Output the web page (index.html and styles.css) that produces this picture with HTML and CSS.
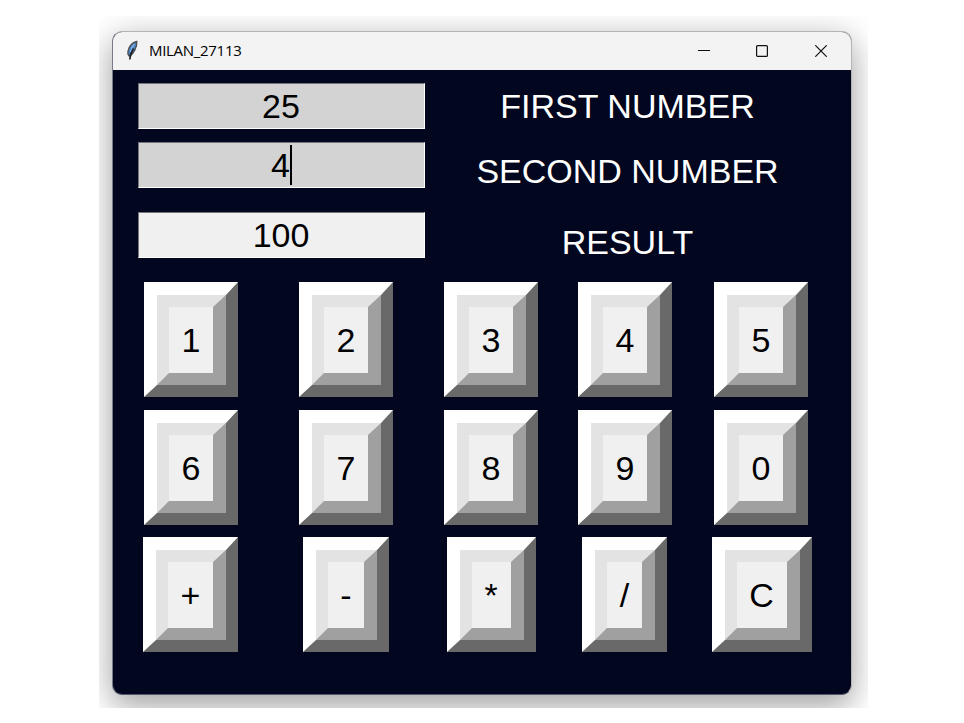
FILE: index.html
```html
<!DOCTYPE html>
<html lang="en">
<head>
<meta charset="utf-8">
<title>MILAN_27113</title>
<link rel="stylesheet" href="styles.css">
</head>
<body>
<main class="desktop">
  <section class="window">
    <header class="titlebar">
      <svg class="feather" width="14" height="22" viewBox="0 0 14 22">
        <path d="M11.800 1.500C7.500 2.500 4 6.500 3 11.200c-.4 2-.2 3.600.8 4.600l1.300.2C8.800 13.500 12 7.500 11.800 1.500Z" fill="#4a83c4" stroke="#4d4d4d" stroke-width="1.300"/>
        <path d="M9.500 4C7 6.500 5.800 9 5.400 12" fill="none" stroke="#7db2e8" stroke-width="1.600"/>
        <path d="M8.500 8.500C6.500 11.500 5 14.500 4.800 19.500" fill="none" stroke="#1c1c1c" stroke-width="1.600"/>
      </svg>
      <span class="title">MILAN_27113</span>
      <nav class="controls">
        <svg width="12" height="12" viewBox="0 0 12 12"><path d="M0 5.500H12" stroke="#111"/></svg>
        <svg width="12" height="12" viewBox="0 0 12 12"><rect x=".6" y=".6" width="10.800" height="10.800" rx="1" fill="none" stroke="#111" stroke-width="1.200"/></svg>
        <svg width="12" height="12" viewBox="0 0 12 12"><path d="M.3.3 11.700 11.700M11.700.3.300 11.700" stroke="#111" stroke-width="1.200"/></svg>
      </nav>
    </header>
    <div class="client">
      <div class="entry">25</div>
      <div class="label">FIRST NUMBER</div>
      <div class="entry"><span class="typed">4</span></div>
      <div class="label low">SECOND NUMBER</div>
      <div class="entry result">100</div>
      <div class="label low">RESULT</div>
      <button class="key"><span>1</span></button>
      <button class="key"><span>2</span></button>
      <button class="key"><span>3</span></button>
      <button class="key"><span>4</span></button>
      <button class="key"><span>5</span></button>
      <button class="key"><span>6</span></button>
      <button class="key"><span>7</span></button>
      <button class="key"><span>8</span></button>
      <button class="key"><span>9</span></button>
      <button class="key"><span>0</span></button>
      <button class="key plus"><span>+</span></button>
      <button class="key minus"><span>-</span></button>
      <button class="key times"><span>*</span></button>
      <button class="key divide"><span>/</span></button>
      <button class="key clear"><span>C</span></button>
    </div>
  </section>
</main>
</body>
</html>
```
FILE: styles.css
```css
* { box-sizing: border-box; }

body {
  margin: 0;
  background: #fff;
  font-family: "Liberation Sans", Arial, sans-serif;
}

.desktop {
  width: 769px;
  height: 692px;
  margin: 16px 0 0 99px;
  padding: 15px 16px 0 13px;
  overflow: hidden;
}

.window {
  height: 664px;
  border: 1px solid #b4b4b4;
  border-bottom-color: #55586a;
  border-left-color: #777a88;
  border-radius: 10px;
  overflow: hidden;
  background: #02061e;
  box-shadow: 0 14px 30px rgba(0, 0, 0, .25), 0 2px 34px rgba(0, 0, 0, .16);
}

.titlebar {
  display: flex;
  align-items: center;
  height: 38px;
  padding: 0 24px 0 12px;
  background: #f3f3f3;
}

.feather { margin-right: 10px; }

.title {
  margin-top: -2px;
  font: 15px/20px "Open Sans", "Noto Sans", sans-serif;
  letter-spacing: -.3px;
  color: #000;
}

.controls {
  display: flex;
  gap: 47px;
  margin-left: auto;
}

.controls svg { display: block; }
.controls svg:first-child { margin-right: -1px; }

.client {
  display: grid;
  grid-template-columns: 130px 180px 110px 158px 114px;
  grid-template-rows: 58px 59px 82px 127px 128px 127px;
  justify-items: center;
  align-items: center;
  padding: 7px 0 0 13px;
  font-size: 34px;
  line-height: 40px;
}

.entry {
  grid-column: span 2;
  display: flex;
  justify-content: center;
  align-items: center;
  width: 287px;
  height: 46px;
  border: 1px solid;
  border-color: #74757c #fff #fff #74757c;
  background: #d3d3d3;
  color: #000;
}

.result { background: #f0f0f0; }

.typed {
  height: 40px;
  margin-left: 1px;
  border-right: 2px solid #000;
}

.label {
  grid-column: span 3;
  padding-left: 1px;
  color: #fff;
  white-space: nowrap;
}

.low { padding-top: 13px; }

.key {
  width: 94px;
  height: 115px;
  padding: 0;
  border: solid;
  border-width: 13px 12px 12px 13px;
  border-color: #fff #696969 #696969 #fff;
  background: #f0f0f0;
  color: #000;
  font: inherit;
}

.key span {
  display: flex;
  justify-content: center;
  align-items: center;
  width: 100%;
  height: 100%;
  border: solid;
  border-width: 12px 13px 12px 12px;
  border-color: #e3e3e3 #a0a0a0 #a0a0a0 #e3e3e3;
}

.plus { width: 95px; margin-right: 1px; }
.minus { width: 86px; }
.times { width: 89px; }
.divide { width: 85px; margin-right: 1px; }
.clear { width: 100px; margin-left: 1px; }
```
